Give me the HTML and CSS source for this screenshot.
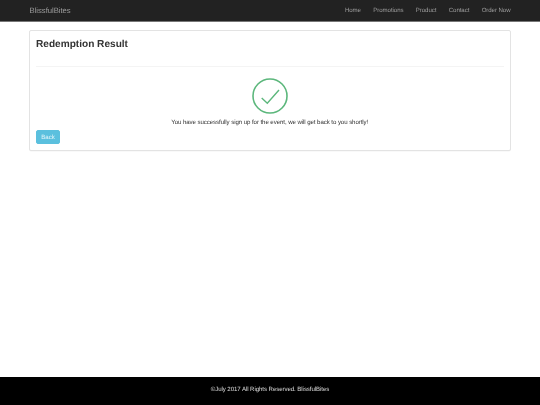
FILE: index.html
```html
<!DOCTYPE html>
<html lang="en">
<head>
<meta charset="utf-8">
<title>Redemption Result</title>
<link rel="stylesheet" href="styles.css">
</head>
<body>
<nav class="navbar">
  <a class="brand" href="#">BlissfulBites</a>
  <ul class="nav">
    <li><a href="#">Home</a></li>
    <li><a href="#">Promotions</a></li>
    <li><a href="#">Product</a></li>
    <li><a href="#">Contact</a></li>
    <li><a href="#">Order Now</a></li>
  </ul>
</nav>
<main class="main">
  <section class="panel">
    <h3 class="title">Redemption Result</h3>
    <hr class="rule">
    <div class="result">
      <svg class="check" viewBox="0 0 36 36" width="36" height="36" aria-hidden="true">
        <circle cx="18" cy="18" r="17" fill="none" stroke="#5cb77c" stroke-width="1.6"/>
        <path d="M9.7 20 L15.3 25.3 L27 12" fill="none" stroke="#5cb77c" stroke-width="1.4"/>
      </svg>
      <p class="message">You have successfully sign up for the event, we will get back to you shortly!</p>
    </div>
    <a class="btn" href="#">Back</a>
  </section>
</main>
<footer class="footer">©July 2017 All Rights Reserved. BlissfulBites</footer>
</body>
</html>
```
FILE: styles.css
```css
* { box-sizing: border-box; }
html, body { height: 100%; }
html { background: #fff; }
body {
  margin: 0;
  display: flex;
  flex-direction: column;
  height: 405px;
  overflow: hidden;
  background: #fff;
  color: #333;
  font-family: "Liberation Sans", Arial, sans-serif;
  font-size: 6.1px;
  letter-spacing: -0.07px;
  line-height: 10px;
  text-rendering: geometricPrecision;
  filter: blur(0.3px);
}
a { text-decoration: none; }
.navbar {
  flex: none;
  height: 22px;
  padding: 1px 29.5px 0;
  display: flex;
  align-items: center;
  justify-content: space-between;
  background: #222;
  border-bottom: 1px solid #777;
}
.brand { color: #9d9d9d; font-size: 7.7px; letter-spacing: -0.02px; }
.nav {
  display: flex;
  gap: 12.4px;
  margin: 0;
  padding: 0;
  list-style: none;
}
.nav a { color: #9d9d9d; }
.main { flex: 1; padding: 8px 29.5px 0 29px; }
.panel {
  height: 120.5px;
  padding: 6px;
  background: #fff;
  border: 1px solid #e3e3e3;
  border-radius: 2px;
  box-shadow: 0 0.5px 0.5px rgba(0,0,0,.05);
}
.title {
  margin: 1px 0 0;
  font-size: 10.1px;
  letter-spacing: 0;
  line-height: 14px;
  font-weight: 700;
  color: #333;
}
.rule {
  margin: 14px 0 0;
  border: 0;
  border-top: 1px solid #f4f4f4;
}
.result {
  display: flex;
  flex-direction: column;
  align-items: center;
  padding-top: 11px;
}
.check { display: block; }
.message { margin: 3.5px 0 0; text-align: center; color: #333; }
.btn {
  display: block;
  width: 24px;
  height: 14.5px;
  margin-top: 2px;
  background: #5bc0de;
  border: 0.5px solid #5bc0de;
  border-radius: 2px;
  color: #e6f6fb;
  line-height: 14.5px;
  text-align: center;
}
.footer {
  flex: none;
  height: 28px;
  background: #000;
  color: #ddd;
  line-height: 26px;
  text-align: center;
}
```
